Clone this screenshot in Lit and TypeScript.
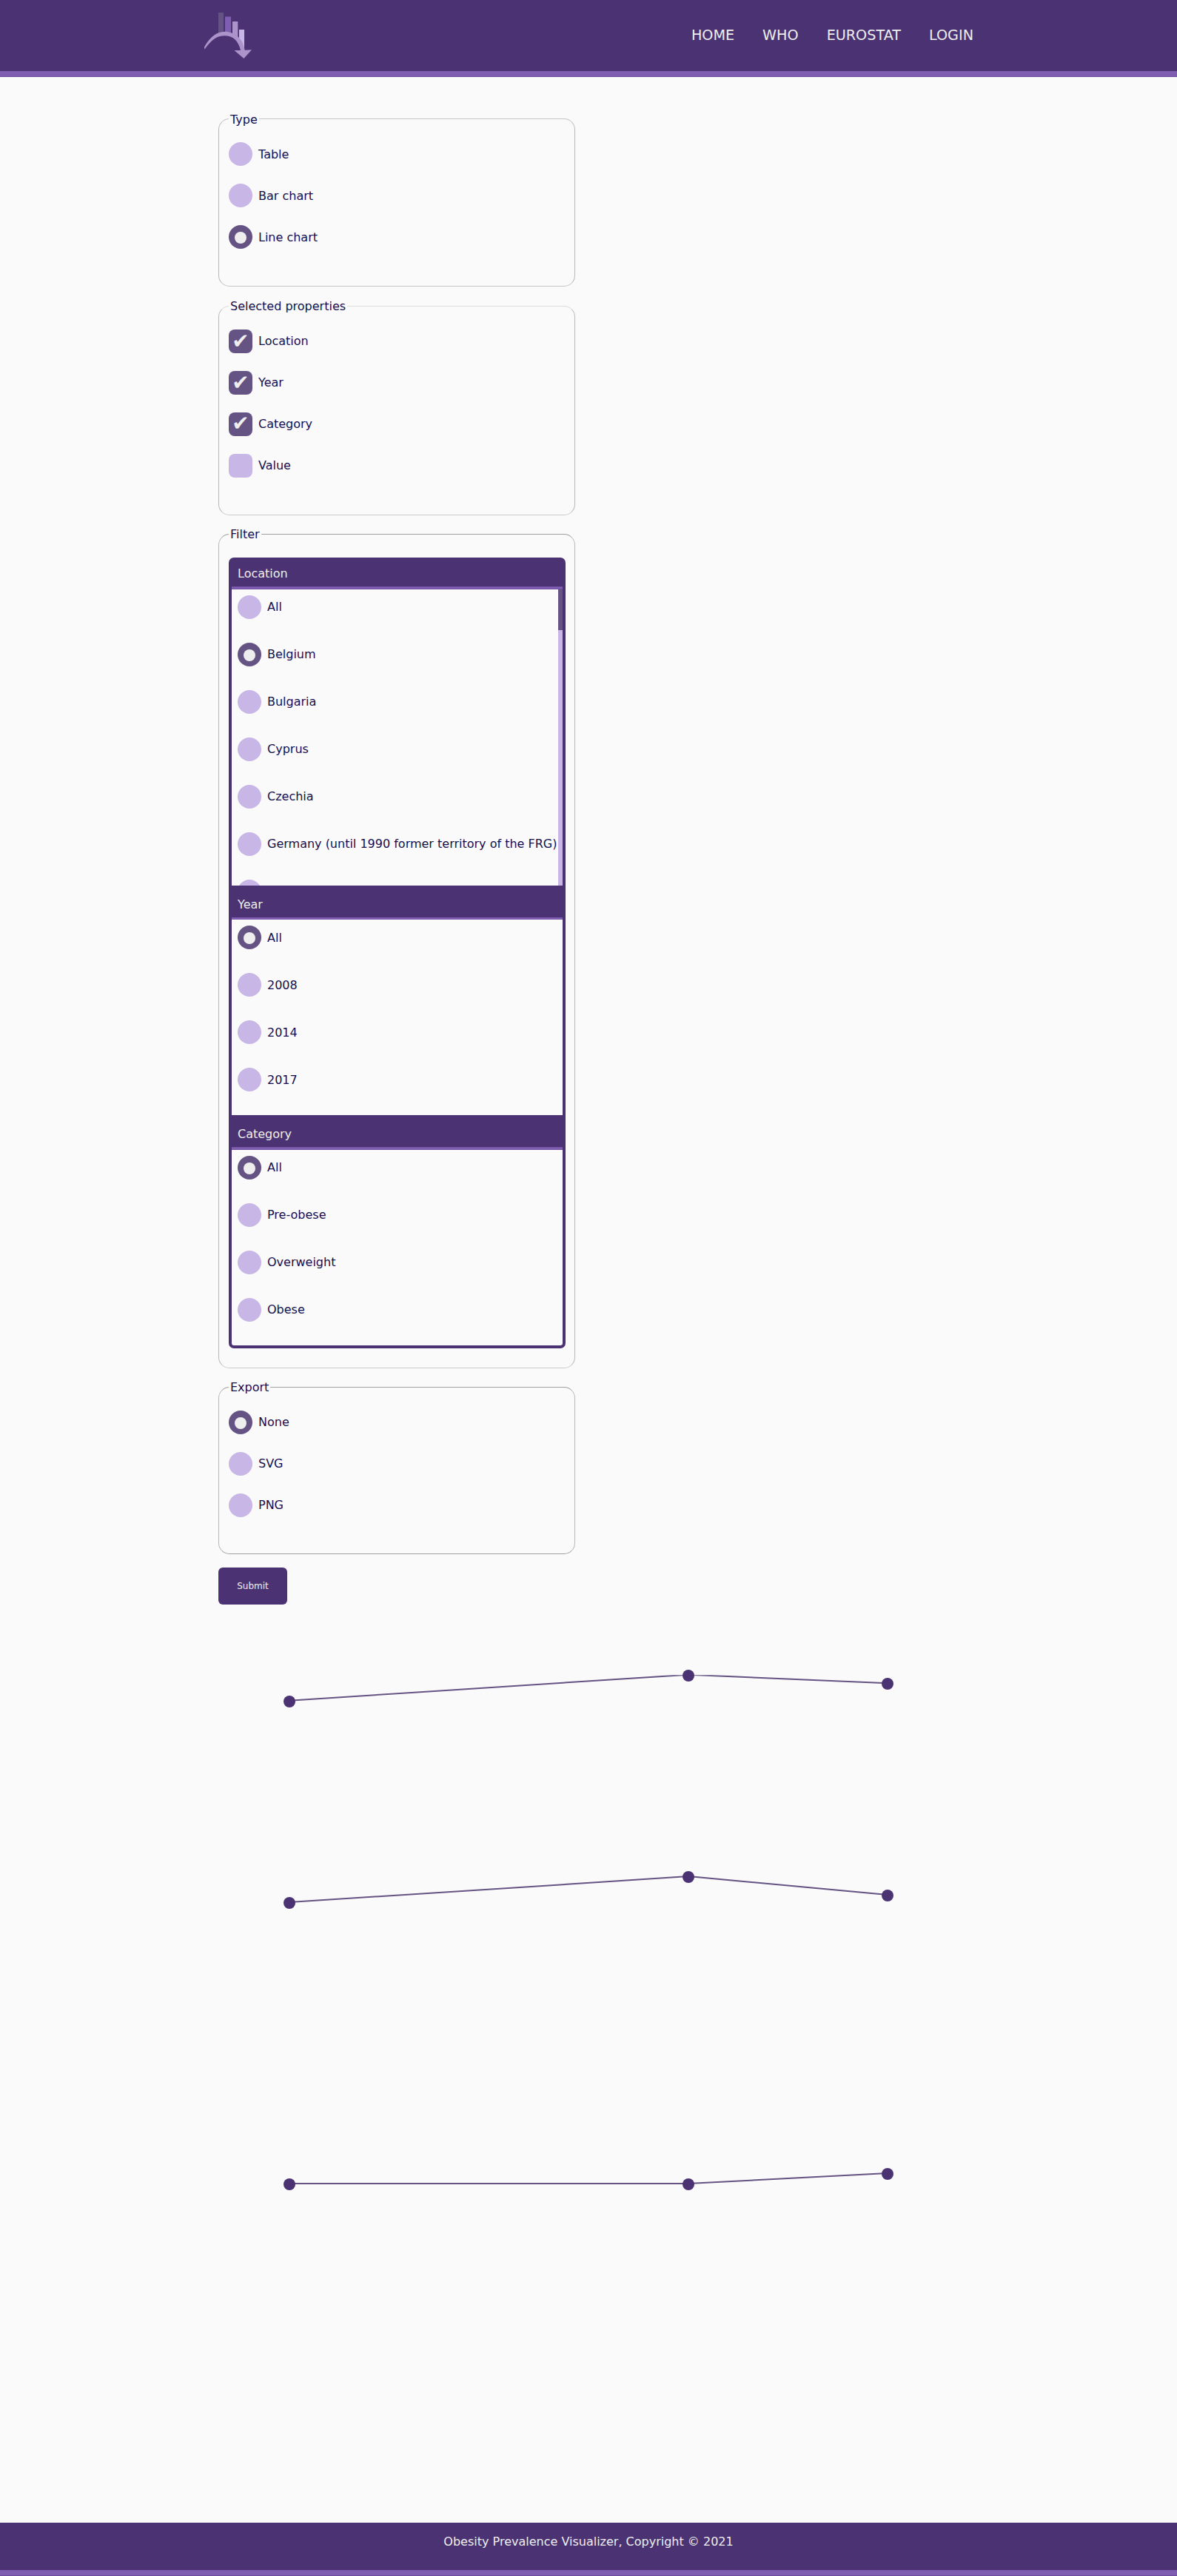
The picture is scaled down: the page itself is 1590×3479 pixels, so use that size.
import { LitElement, html, svg, css } from "lit";
import { customElement, property } from "lit/decorators.js";
import { classMap } from "lit/directives/class-map.js";

interface Option {
  label: string;
  on?: boolean;
}

type Point = [number, number];

interface Series {
  dots: Point[];
  lines: [number, number, number, number][];
}

const opts = (labels: string[], selected: string[]): Option[] =>
  labels.map((label) => ({ label, on: selected.includes(label) }));

@customElement("option-item")
export class OptionItem extends LitElement {
  @property() label = "";
  @property({ type: Boolean }) on = false;
  @property() kind = "radio";

  static styles = css`
    :host {
      display: flex;
      gap: 8px;
      height: 32px;
      white-space: nowrap;
    }
    .mark {
      display: flex;
      justify-content: center;
      box-sizing: border-box;
      width: 32px;
      height: 32px;
      flex: none;
      background: #c8b6e6;
    }
    .mark.on {
      background: #655384;
    }
    .radio {
      border-radius: 50%;
    }
    .check {
      border-radius: 8px;
    }
    .dot {
      width: 16.4px;
      height: 16.4px;
      margin-top: 8.6px;
      border-radius: 50%;
      background: #eeeeee;
    }
    .tick {
      color: #eeeeee;
      font-size: 28px;
      line-height: 28px;
      margin-top: var(--tick-top, 2px);
    }
    .text {
      line-height: 19px;
      padding-top: var(--label-top, 6px);
    }
  `;

  render() {
    const mark =
      this.kind === "check"
        ? html`<span class="tick">✔</span>`
        : html`<span class="dot"></span>`;
    return html`
      <span class=${classMap({ mark: true, on: this.on, [this.kind]: true })}>${this.on ? mark : ""}</span>
      <span class="text">${this.label}</span>
    `;
  }
}

@customElement("app-root")
export class AppRoot extends LitElement {
  static styles = css`
    :host {
      display: block;
      min-height: 3479px;
      background: #fafafa;
      color: #140f50;
      font: 16px/19px "DejaVu Sans", sans-serif;
    }
    .header {
      box-sizing: border-box;
      background: #4b3373;
      height: 104px;
      border-bottom: 1px solid #6c4c9c;
      box-shadow: inset 0 -7px #7f5eb2;
      display: flex;
      justify-content: center;
    }
    .bar {
      width: 1040px;
      display: flex;
      justify-content: space-between;
    }
    .logo {
      width: 66px;
      height: 96px;
      display: block;
    }
    .nav {
      display: flex;
      gap: 38px;
      padding-top: 36px;
      font-size: 19.2px;
      line-height: 24px;
      color: #eeeeee;
    }
    .main {
      padding-top: 47px;
      margin-left: 295px;
      width: 482px;
      height: 2016px;
      display: flex;
      flex-direction: column;
      align-items: stretch;
    }
    .group {
      margin: 0 0 16px;
      padding: 22px 12px 26px 13px;
      border: 1px solid #b8b8b8;
      border-radius: 15px;
      min-width: 0;
    }
    .group.type {
      border-top-color: #c4c4c4;
      border-bottom-color: #c4c4c4;
      margin-bottom: 17px;
      --label-top: 7px;
    }
    .group.selected {
      border-top-color: #dcdcdc;
      border-bottom-color: #cccccc;
    }
    .group.filter {
      border-top-color: #a0a0a0;
      border-bottom-color: #cccccc;
    }
    .group.export {
      border-top-color: #a0a0a0;
      border-bottom-color: #a0a0a0;
      padding-bottom: 25px;
      margin-bottom: 18px;
    }
    .legend {
      padding: 0 2px;
      height: 19px;
    }
    .type .legend {
      line-height: 21px;
    }
    .item {
      margin-bottom: 24px;
    }
    .selected .item:nth-of-type(3) {
      --tick-top: 1px;
    }
    .lists {
      border: 4px solid #4b3373;
      border-radius: 7px;
    }
    .title {
      box-sizing: border-box;
      background: #4b3373;
      color: #eeeeee;
      padding: 16px 8px 0;
      height: 46px;
      border-bottom: 3px solid #7f5eb2;
    }
    .title.location {
      height: 39px;
      padding-top: 8px;
    }
    .title.category {
      height: 47px;
    }
    .title.location,
    .title.category {
      border-bottom: 1px solid #7050a2;
      box-shadow: inset 0 -2px #7f5eb2, inset 0 -3px #7453a6;
    }
    .list {
      box-sizing: border-box;
      padding: 8px 0 0 8px;
      height: 264px;
      overflow: hidden;
    }
    .list .item {
      margin-bottom: 32px;
    }
    .list.year {
      --label-top: 7px;
    }
    .scroller {
      display: flex;
      height: 400px;
    }
    .scroller .list {
      flex: 1;
      height: 400px;
      min-width: 0;
    }
    .track {
      width: 6px;
      background: #c8b6e6;
    }
    .thumb {
      height: 55px;
      background: #655384;
    }
    .submit {
      align-self: flex-start;
      width: 93px;
      height: 50px;
      padding: 0;
      border: none;
      border-radius: 6px;
      background: #4b3373;
      color: #eeeeee;
      font: 12px "DejaVu Sans", sans-serif;
    }
    .charts {
      display: block;
    }
    .line {
      stroke: #655384;
      stroke-width: 2;
    }
    .point {
      fill: #4b3373;
    }
    .footer {
      box-sizing: border-box;
      height: 72px;
      padding-top: 16px;
      background: #4b3373;
      color: #eeeeee;
      text-align: center;
      border-bottom: 1px solid #6c4c9c;
      box-shadow: inset 0 -7px #7f5eb2;
    }
  `;

  private nav = ["HOME", "WHO", "EUROSTAT", "LOGIN"];

  private types = opts(["Table", "Bar chart", "Line chart"], ["Line chart"]);
  private props = opts(["Location", "Year", "Category", "Value"], ["Location", "Year", "Category"]);
  private locations = opts(
    ["All", "Belgium", "Bulgaria", "Cyprus", "Czechia", "Germany (until 1990 former territory of the FRG)", ""],
    ["Belgium"],
  );
  private years = opts(["All", "2008", "2014", "2017"], ["All"]);
  private categories = opts(["All", "Pre-obese", "Overweight", "Obese"], ["All"]);
  private exports = opts(["None", "SVG", "PNG"], ["None"]);

  private series: Series[] = [
    {
      dots: [[391, 131], [930, 96], [1199, 107]],
      lines: [[391, 129.7, 930, 94.7], [930, 94.7, 1199, 106.2]],
    },
    {
      dots: [[391, 403], [930, 368], [1199, 393]],
      lines: [[391, 402.1, 930, 367.1], [930, 367.1, 1199, 392.1]],
    },
    {
      dots: [[391, 783], [930, 783], [1199, 769]],
      lines: [[391, 782, 930, 782], [930, 782, 1199, 768]],
    },
  ];

  private items(list: Option[], kind = "radio") {
    return list.map(
      (o) => html`<option-item class="item" kind=${kind} .label=${o.label} .on=${!!o.on}></option-item>`,
    );
  }

  render() {
    return html`
      <header class="header">
        <div class="bar">
          <svg class="logo" viewBox="275 0 66 96">
            <rect x="295" y="17" width="7" height="28" fill="#655384" />
            <rect x="304" y="22.5" width="8" height="23.5" fill="#7f5eb2" />
            <rect x="314" y="29" width="7.3" height="21.5" fill="#ac94ca" />
            <polygon points="323,40 330,40 330,66 323,56" fill="#c8b6e6" />
            <path
              fill="#ac94ca"
              d="M276 63.500C283 51 292 42.700 303.300 42.700C317 42.700 328.500 52 330.700 67.800L340 67.300L329.400 79L316.500 68L325 68C322 55 315 48.300 303.300 48.300C293 48.300 286 53.500 276.300 66.700Z"
            />
          </svg>
          <nav class="nav">${this.nav.map((n) => html`<span>${n}</span>`)}</nav>
        </div>
      </header>
      <main class="main">
        <fieldset class="group type">
          <legend class="legend">Type</legend>
          ${this.items(this.types)}
        </fieldset>
        <fieldset class="group selected">
          <legend class="legend">Selected properties</legend>
          ${this.items(this.props, "check")}
        </fieldset>
        <fieldset class="group filter">
          <legend class="legend">Filter</legend>
          <div class="lists">
            <div class="title location">Location</div>
            <div class="scroller">
              <div class="list">${this.items(this.locations)}</div>
              <div class="track"><div class="thumb"></div></div>
            </div>
            <div class="title">Year</div>
            <div class="list year">${this.items(this.years)}</div>
            <div class="title category">Category</div>
            <div class="list">${this.items(this.categories)}</div>
          </div>
        </fieldset>
        <fieldset class="group export">
          <legend class="legend">Export</legend>
          ${this.items(this.exports)}
        </fieldset>
        <button class="submit">Submit</button>
      </main>
      <svg class="charts" width="1590" height="1240" viewBox="0 0 1590 1240">
        <defs>
          <clipPath id="plot"><rect x="0" y="95.300" width="1590" height="1144" /></clipPath>
        </defs>
        ${this.series.map(
          (s) => svg`
            <g clip-path="url(#plot)">
              ${s.lines.map(([x1, y1, x2, y2]) => svg`<line class="line" x1=${x1} y1=${y1} x2=${x2} y2=${y2} />`)}
            </g>
            ${s.dots.map(([x, y]) => svg`<circle class="point" cx=${x} cy=${y} r="8" />`)}`,
        )}
      </svg>
      <footer class="footer">Obesity Prevalence Visualizer, Copyright © 2021</footer>
    `;
  }
}
